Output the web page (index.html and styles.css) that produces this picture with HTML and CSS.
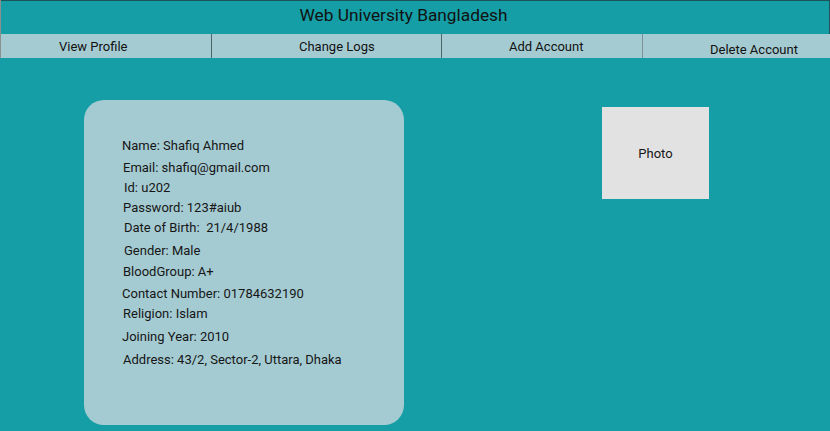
FILE: index.html
```html
<!DOCTYPE html>
<html lang="en">
<head>
<meta charset="utf-8">
<title>Web University Bangladesh</title>
<link rel="stylesheet" href="styles.css">
</head>
<body>
<div class="page">
  <header class="header">
    <h1 class="title">Web University Bangladesh</h1>
  </header>
  <nav class="nav">
    <a class="nav-item nav-view">View Profile</a>
    <a class="nav-item nav-logs">Change Logs</a>
    <a class="nav-item nav-add">Add Account</a>
    <a class="nav-item nav-delete">Delete Account</a>
  </nav>
  <main class="main">
    <section class="card">
      <p class="line">Name: Shafiq Ahmed</p>
      <p class="line">Email: shafiq@gmail.com</p>
      <p class="line">Id: u202</p>
      <p class="line">Password: 123#aiub</p>
      <p class="line">Date of Birth:&nbsp; 21/4/1988</p>
      <p class="line">Gender: Male</p>
      <p class="line">BloodGroup: A+</p>
      <p class="line">Contact Number: 01784632190</p>
      <p class="line">Religion: Islam</p>
      <p class="line">Joining Year: 2010</p>
      <p class="line">Address: 43/2, Sector-2, Uttara, Dhaka</p>
    </section>
    <div class="photo">Photo</div>
  </main>
</div>
</body>
</html>
```

FILE: styles.css
```css
* { box-sizing: border-box; }

html, body {
  margin: 0;
  padding: 0;
  height: 100%;
}

body {
  background: #159ea6;
  font-family: Roboto, "Noto Sans", sans-serif;
  color: #161616;
  overflow: hidden;
}

.page {
  position: relative;
  min-height: 431px;
}

.page::before {
  content: "";
  position: absolute;
  left: 0;
  top: 0;
  width: 1px;
  height: 58px;
  background: #8a8f90;
}

.header {
  height: 34px;
  border-top: 1px solid #1d545a;
  border-right: 1px solid #1d545a;
  padding: 4px 22px 0 0;
  text-align: center;
}

.title {
  margin: 0;
  font-size: 17.3px;
  font-weight: 400;
  line-height: 20px;
  color: #111;
}

.nav {
  display: grid;
  grid-template-columns: 211px 230px 201px 1fr;
  height: 24px;
  background: #a5cbd2;
}

.nav-item {
  font-size: 13px;
  line-height: 15px;
  color: #111;
  padding-top: 5px;
  text-decoration: none;
}

.nav-logs, .nav-add {
  border-left: 1px solid #4b6569;
}
.nav-delete {
  border-left: 1px solid #7e9296;
}

.nav-view { padding-left: 59px; }
.nav-logs { padding-left: 87px; }
.nav-add { padding-left: 67px; }
.nav-delete { padding-left: 67px; padding-top: 8px; }

.main {
  display: flex;
  align-items: flex-start;
  padding: 42px 0 0 84px;
}

.card {
  width: 320px;
  height: 325px;
  background: #a5cbd2;
  border-radius: 20px;
  padding: 38px 0 0 38px;
}

.line {
  margin: 0;
  font-size: 13px;
  line-height: 16px;
  color: #161616;
  white-space: nowrap;
}

.line:nth-child(2)  { margin-top: 6px; margin-left: 1px; }
.line:nth-child(3)  { margin-top: 4px; margin-left: 2px; }
.line:nth-child(4)  { margin-top: 4px; margin-left: 1px; }
.line:nth-child(5)  { margin-top: 4px; margin-left: 2px; }
.line:nth-child(6)  { margin-top: 7px; margin-left: 2px; }
.line:nth-child(7)  { margin-top: 5px; margin-left: 1px; }
.line:nth-child(8)  { margin-top: 6px; }
.line:nth-child(9)  { margin-top: 4px; margin-left: 1px; }
.line:nth-child(10) { margin-top: 7px; }
.line:nth-child(11) { margin-top: 7px; margin-left: 1px; }

.photo {
  width: 107px;
  height: 92px;
  margin: 7px 0 0 198px;
  background: #e3e2e3;
  display: flex;
  align-items: center;
  justify-content: center;
  font-size: 13px;
  color: #161616;
}
```
